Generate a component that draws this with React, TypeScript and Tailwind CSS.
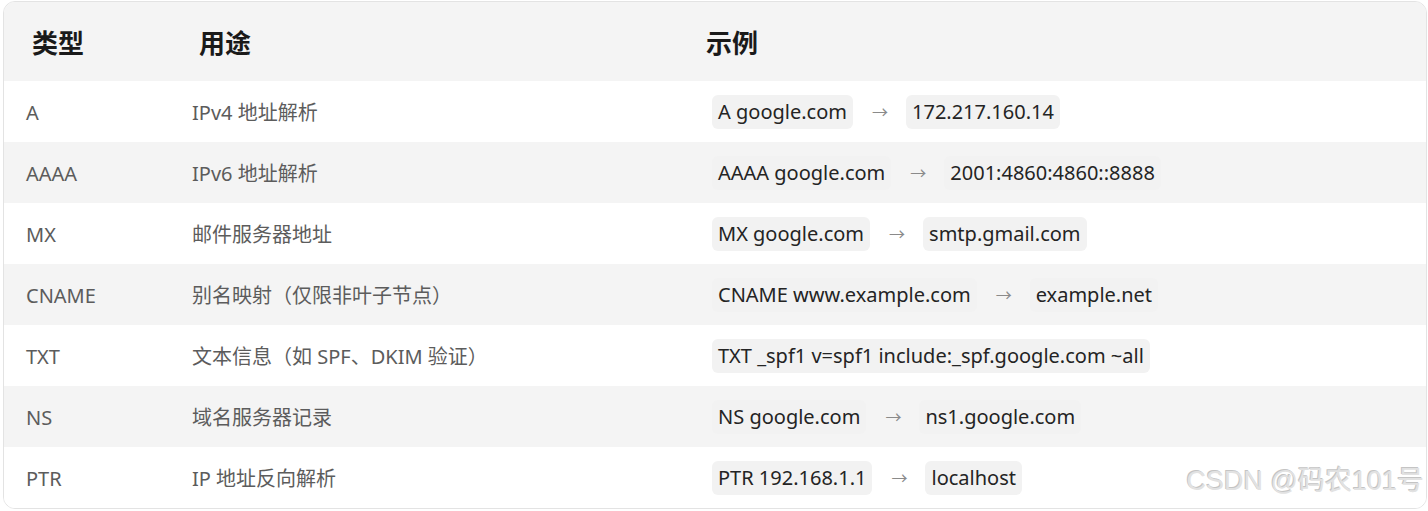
import React from 'react';

type Row = {
  type: string;
  usage: string;
  left: string;
  right?: string;
};

const rows: Row[] = [
  { type: 'A', usage: 'IPv4 地址解析', left: 'A google.com', right: '172.217.160.14' },
  { type: 'AAAA', usage: 'IPv6 地址解析', left: 'AAAA google.com', right: '2001:4860:4860::8888' },
  { type: 'MX', usage: '邮件服务器地址', left: 'MX google.com', right: 'smtp.gmail.com' },
  { type: 'CNAME', usage: '别名映射（仅限非叶子节点）', left: 'CNAME www.example.com', right: 'example.net' },
  { type: 'TXT', usage: '文本信息（如 SPF、DKIM 验证）', left: 'TXT _spf1 v=spf1 include:_spf.google.com ~all' },
  { type: 'NS', usage: '域名服务器记录', left: 'NS google.com', right: 'ns1.google.com' },
  { type: 'PTR', usage: 'IP 地址反向解析', left: 'PTR 192.168.1.1', right: 'localhost' },
];

const Chip = ({ children }: { children: React.ReactNode }) => (
  <span className="inline-flex h-[34px] items-center rounded-[6px] bg-[#f2f2f2] px-[6px] pt-px text-[20px] text-[#242424]">
    {children}
  </span>
);

export default function App() {
  return (
    <div
      className="relative h-[511px] w-[1428px] bg-white pt-px pl-[3px] pr-px"
      style={{ fontFamily: '"Noto Sans", "Noto Sans CJK SC", sans-serif' }}
    >
      <div className="overflow-hidden rounded-[12px] border border-[#e3e3e3]">
        {/* Header */}
        <div className="flex h-[79px] items-center bg-[#f4f4f4] pt-[3px] text-[26px] font-bold text-[#1a1a1a]">
          <div className="w-[195px] pl-[28px]">类型</div>
          <div className="w-[507px]">用途</div>
          <div>示例</div>
        </div>

        {/* Rows */}
        {rows.map((row, i) => (
          <div
            key={row.type}
            className={`flex h-[61px] items-center text-[20px] text-[#5c5c5c] ${i % 2 === 1 ? 'bg-[#f4f4f4]' : 'bg-white'}`}
          >
            <div className="w-[188px] pt-[3px] pl-[22px]">{row.type}</div>
            <div className="w-[520px] pt-[3px]">{row.usage}</div>
            <div className="flex items-center">
              <Chip>{row.left}</Chip>
              {row.right && (
                <>
                  <span className="pr-[18px] pl-[19px] text-[16px] text-[#8a8a8a]">→</span>
                  <Chip>{row.right}</Chip>
                </>
              )}
            </div>
          </div>
        ))}
      </div>

      {/* watermark */}
      <div
        className="absolute right-[4px] bottom-[10px] text-[27px] font-normal text-[#e2e2e2] [text-shadow:-1px_-1px_0_#c4c4c4,1px_1px_0_#ffffff]"
        style={{ fontFamily: '"Liberation Sans", "Noto Sans CJK SC", sans-serif' }}
      >
        CSDN @码农101号
      </div>
    </div>
  );
}
